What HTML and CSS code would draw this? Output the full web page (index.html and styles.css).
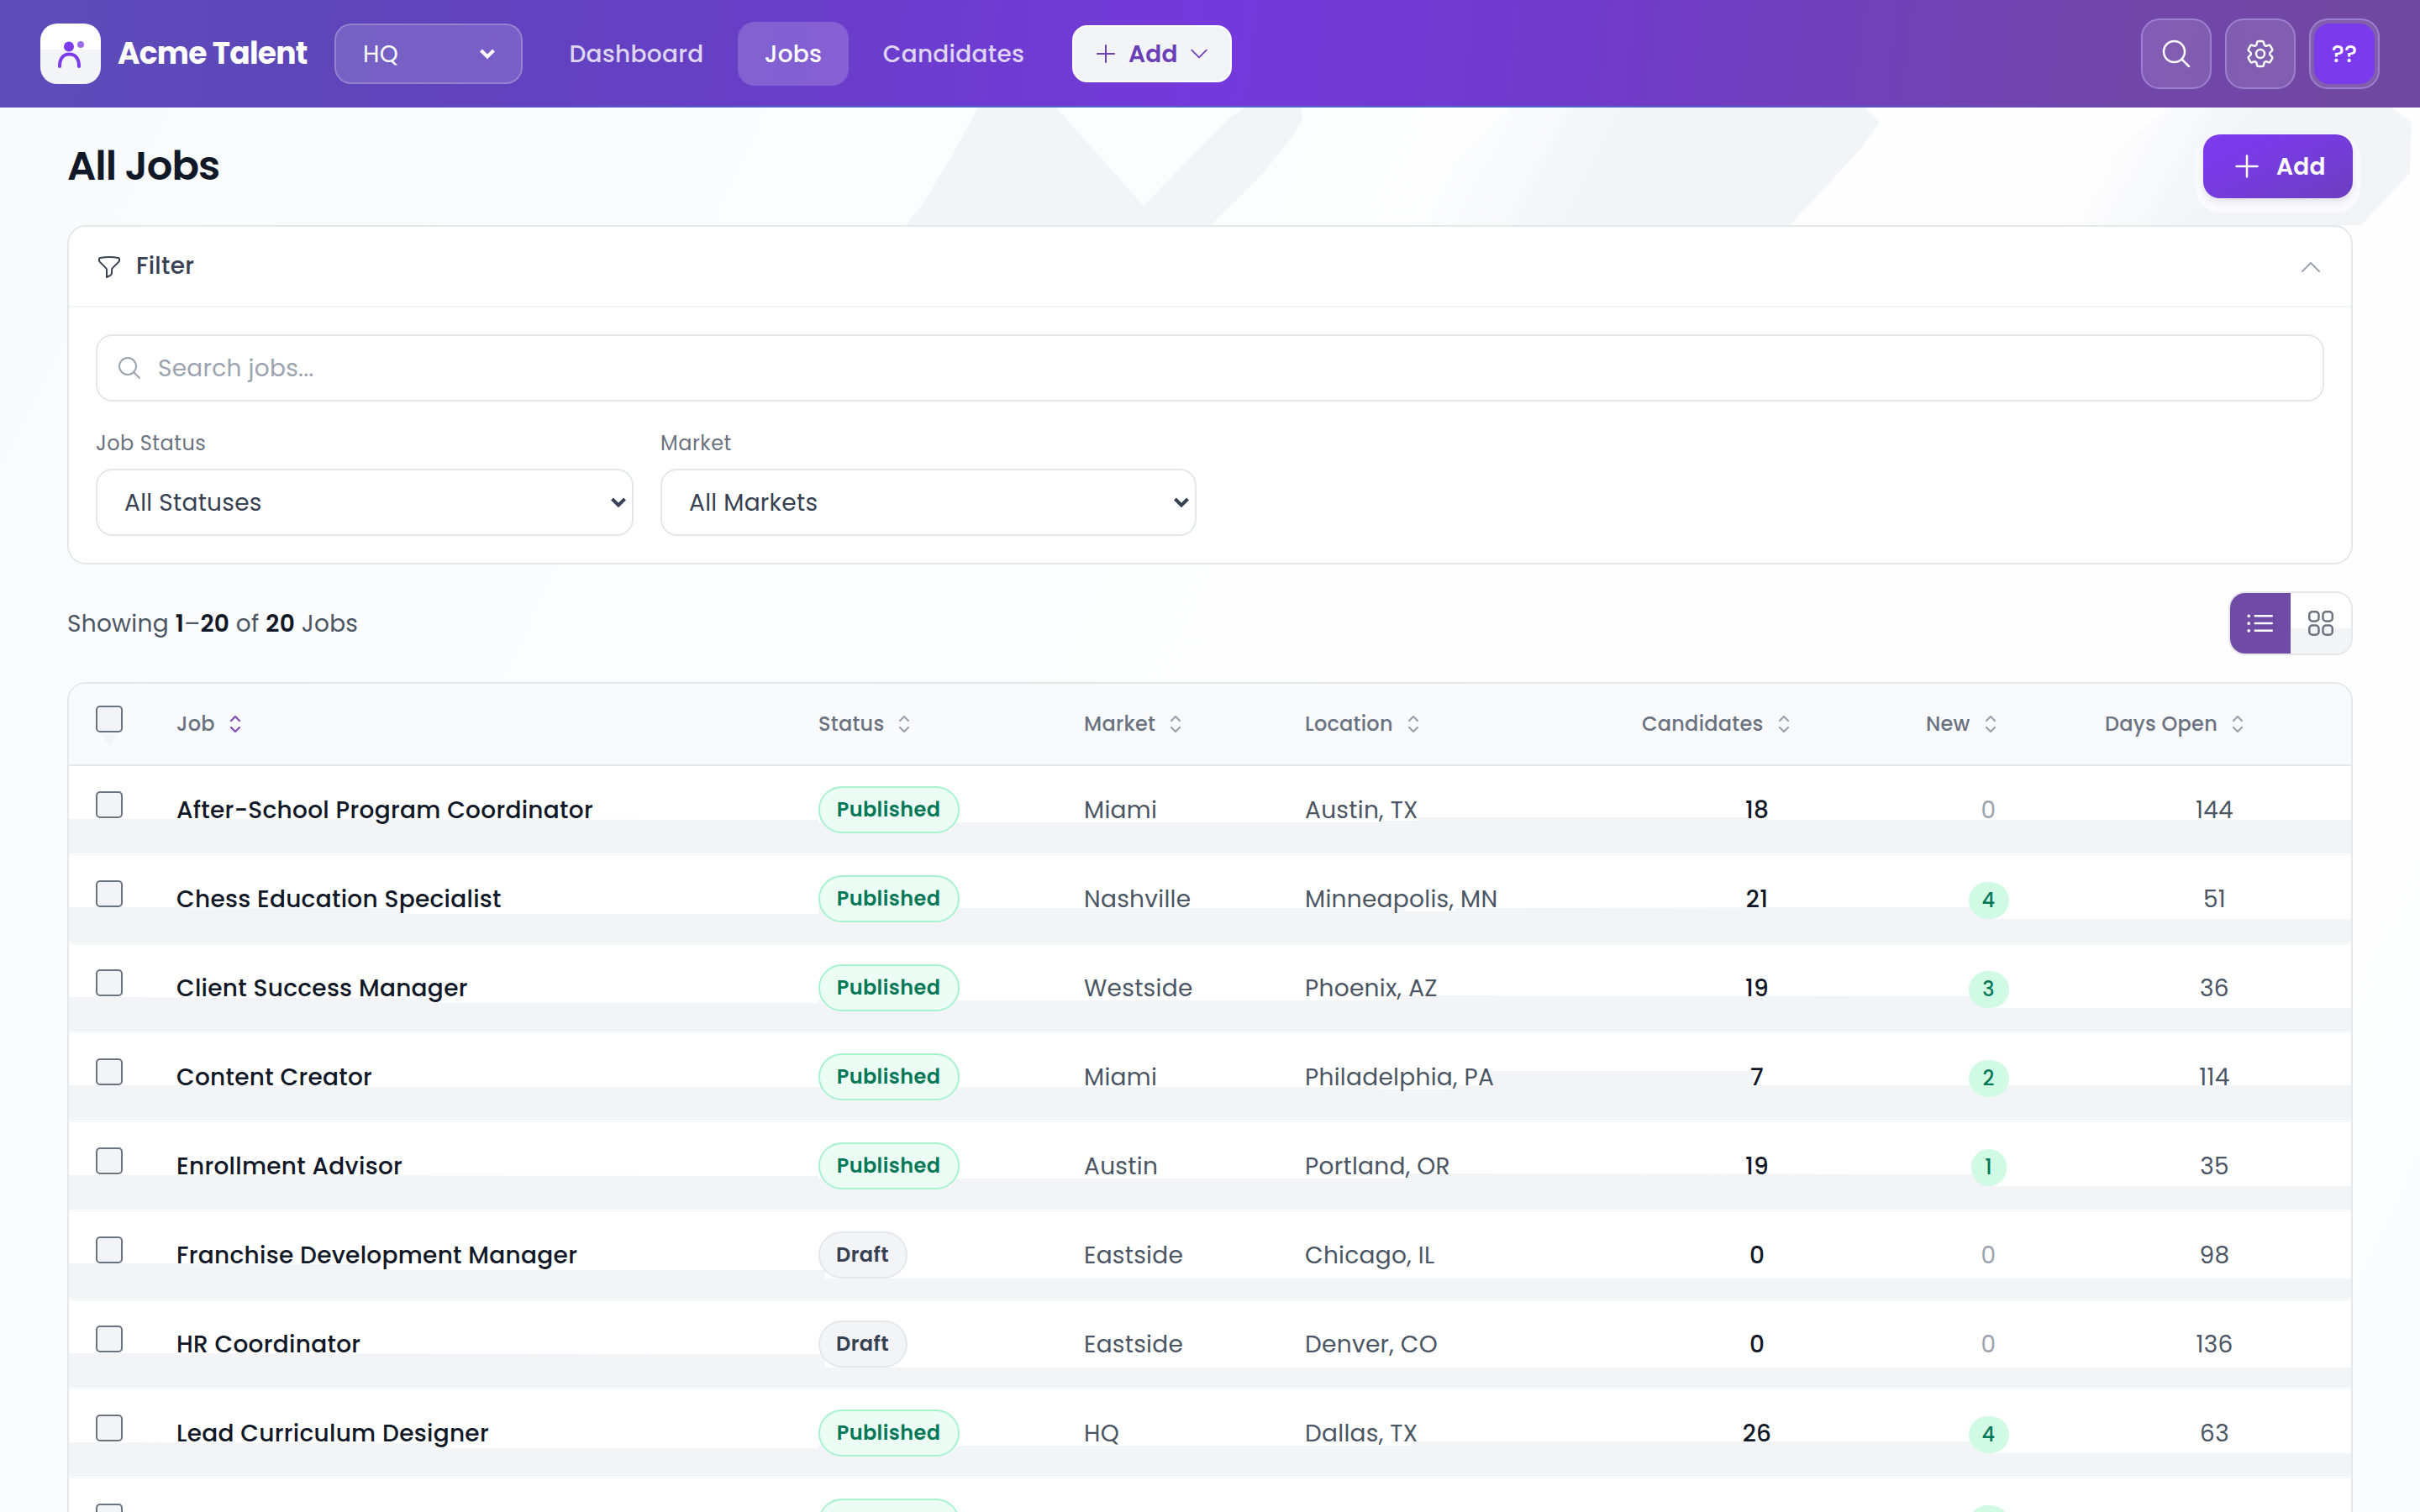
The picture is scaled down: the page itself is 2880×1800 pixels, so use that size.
FILE: index.html
```html
<!DOCTYPE html>
<html lang="en">
<head>
<meta charset="utf-8">
<title>All Jobs</title>
<link rel="stylesheet" href="styles.css">
</head>
<body>
<svg class="sprite" aria-hidden="true">
  <symbol id="plus" viewBox="0 0 24 24"><path d="M12 4.5v15m7.5-7.5h-15"/></symbol>
  <symbol id="down" viewBox="0 0 24 24"><path d="m19.5 8.25-7.5 7.5-7.5-7.5"/></symbol>
  <symbol id="up" viewBox="0 0 24 24"><path d="m4.5 15.75 7.5-7.5 7.5 7.5"/></symbol>
  <symbol id="search" viewBox="0 0 24 24"><path d="m21 21-5.197-5.197m0 0A7.5 7.5 0 1 0 5.196 5.196a7.5 7.5 0 0 0 10.607 10.607Z"/></symbol>
  <symbol id="caret" viewBox="0 0 20 14"><path d="m2.5 3 7.5 7.5L17.500 3"/></symbol>
  <symbol id="sort" viewBox="0 0 24 24"><path d="M8.250 15 12 18.750 15.750 15m-7.500-6L12 5.250 15.750 9"/></symbol>
</svg>

<header class="topbar">
  <span class="logo">
    <svg viewBox="0 0 72 72"><circle cx="34" cy="27.500" r="6"/><circle class="soft" cx="48" cy="25" r="4"/><path d="M23 51c0-8 3.500-14.500 11.500-14.500S46 43 46 51"/></svg>
  </span>
  <span class="brand">Acme Talent</span>
  <div class="region"><span>HQ</span><svg class="caret"><use href="#caret"/></svg></div>
  <nav class="nav">
    <a class="nav-link dashboard">Dashboard</a>
    <a class="nav-link active">Jobs</a>
    <a class="nav-link candidates">Candidates</a>
  </nav>
  <div class="quick-add"><svg class="i32"><use href="#plus"/></svg><span>Add</span><svg class="i28"><use href="#down"/></svg></div>
  <div class="tools">
    <span class="tool"><svg class="i40"><use href="#search"/></svg></span>
    <span class="tool"><svg class="i40" viewBox="0 0 24 24"><path d="M9.594 3.940c.09-.542.56-.940 1.110-.940h2.593c.55 0 1.020.398 1.110.940l.213 1.281c.063.374.313.686.645.870.074.040.147.083.220.127.325.196.720.257 1.075.124l1.217-.456a1.125 1.125 0 0 1 1.370.490l1.296 2.247a1.125 1.125 0 0 1-.260 1.431l-1.003.827c-.293.241-.438.613-.430.992a7.723 7.723 0 0 1 0 .255c-.008.378.137.750.430.991l1.004.827c.424.350.534.955.260 1.430l-1.298 2.247a1.125 1.125 0 0 1-1.369.491l-1.217-.456c-.355-.133-.750-.072-1.076.124a6.470 6.470 0 0 1-.220.128c-.331.183-.581.495-.644.869l-.213 1.281c-.090.543-.560.940-1.110.940h-2.594c-.550 0-1.019-.398-1.110-.940l-.213-1.281c-.062-.374-.312-.686-.644-.870a6.520 6.520 0 0 1-.220-.127c-.325-.196-.720-.257-1.076-.124l-1.217.456a1.125 1.125 0 0 1-1.369-.490l-1.297-2.247a1.125 1.125 0 0 1 .260-1.431l1.004-.827c.292-.240.437-.613.430-.991a6.932 6.932 0 0 1 0-.255c.007-.380-.138-.751-.430-.992l-1.004-.827a1.125 1.125 0 0 1-.260-1.430l1.297-2.247a1.125 1.125 0 0 1 1.370-.491l1.216.456c.356.133.751.072 1.076-.124.072-.044.146-.086.220-.128.332-.183.582-.495.644-.869l.214-1.280Z"/><path d="M15 12a3 3 0 1 1-6 0 3 3 0 0 1 6 0Z"/></svg></span>
    <span class="tool"><span class="avatar">??</span></span>
  </div>
</header>

<svg class="backdrop" viewBox="0 0 2880 140" aria-hidden="true">
  <defs>
    <linearGradient id="fadeA" gradientUnits="userSpaceOnUse" x1="1720" y1="40" x2="1890" y2="130"><stop offset="0" stop-color="#f3f4f8" stop-opacity="0"/><stop offset="1" stop-color="#f3f4f8"/></linearGradient>
    <linearGradient id="fadeB" gradientUnits="userSpaceOnUse" x1="2500" y1="30" x2="2640" y2="110"><stop offset="0" stop-color="#f3f4f8" stop-opacity="0"/><stop offset="1" stop-color="#f3f4f8"/></linearGradient>
  </defs>
  <path fill="#f3f4f8" d="M1164 0h93l104 117L1465 10q15-6 15-10h68l2 15-15 23-35 44-59 58H1078l20-25 34-56Z"/>
  <path fill="url(#fadeA)" d="M1800 0h420l17 18-22 30-40 44-45 48H1660Z"/>
  <path fill="url(#fadeB)" d="M2580 0h266l24 18-2 60-58 62H2420Z"/>
</svg>

<main class="page">
  <div class="title-row"><h1>All Jobs</h1><div class="add-button"><svg class="i40"><use href="#plus"/></svg><span>Add</span></div></div>

  <section class="card filter">
    <div class="filter-head"><svg class="i32" viewBox="0 0 24 24"><path d="M12 3c2.755 0 5.455.232 8.083.678.533.090.917.556.917 1.096v1.044a2.250 2.250 0 0 1-.659 1.591l-5.432 5.432a2.250 2.250 0 0 0-.659 1.591v2.927a2.250 2.250 0 0 1-1.244 2.013L9.750 21v-6.568a2.250 2.250 0 0 0-.659-1.591L3.659 7.409A2.250 2.250 0 0 1 3 5.818V4.774c0-.540.384-1.006.917-1.096A48.320 48.320 0 0 1 12 3Z"/></svg><span>Filter</span><svg class="i32 collapse"><use href="#up"/></svg></div>
    <div class="filter-body">
      <div class="field search"><svg class="i32"><use href="#search"/></svg><span>Search jobs...</span></div>
      <div class="selects">
        <div><label>Job Status</label><div class="field select"><span>All Statuses</span><svg class="caret"><use href="#caret"/></svg></div></div>
        <div><label>Market</label><div class="field select"><span>All Markets</span><svg class="caret"><use href="#caret"/></svg></div></div>
      </div>
    </div>
  </section>

  <div class="summary">
    <p>Showing <b>1</b>–<b>20</b> of <b>20</b> Jobs</p>
    <div class="toggle">
      <span class="on"><svg class="i40" viewBox="0 0 24 24"><path d="M8.250 6.750h12M8.250 12h12m-12 5.250h12M3.750 6.750h.007v.008H3.750V6.750Zm.375 0a.375.375 0 1 1-.750 0 .375.375 0 0 1 .750 0ZM3.750 12h.007v.008H3.750V12Zm.375 0a.375.375 0 1 1-.750 0 .375.375 0 0 1 .750 0Zm-.375 5.250h.007v.008H3.750v-.008Zm.375 0a.375.375 0 1 1-.750 0 .375.375 0 0 1 .750 0Z"/></svg></span>
      <span class="off"><svg class="i40" viewBox="0 0 24 24"><path d="M3.750 6A2.250 2.250 0 0 1 6 3.750h2.250A2.250 2.250 0 0 1 10.500 6v2.250a2.250 2.250 0 0 1-2.250 2.250H6a2.250 2.250 0 0 1-2.250-2.250V6ZM3.750 15.750A2.250 2.250 0 0 1 6 13.500h2.250a2.250 2.250 0 0 1 2.250 2.250V18a2.250 2.250 0 0 1-2.250 2.250H6A2.250 2.250 0 0 1 3.750 18v-2.250ZM13.500 6a2.250 2.250 0 0 1 2.250-2.250H18A2.250 2.250 0 0 1 20.250 6v2.250A2.250 2.250 0 0 1 18 10.500h-2.250a2.250 2.250 0 0 1-2.250-2.250V6ZM13.500 15.750a2.250 2.250 0 0 1 2.250-2.250H18a2.250 2.250 0 0 1 2.250 2.250V18A2.250 2.250 0 0 1 18 20.250h-2.250A2.250 2.250 0 0 1 13.500 18v-2.250Z"/></svg></span>
    </div>
  </div>

  <section class="card table">
    <div class="row head">
      <span class="all"><i class="check"></i></span>
      <span class="sorted">Job<svg class="i32"><use href="#sort"/></svg></span>
      <span>Status<svg class="i32"><use href="#sort"/></svg></span>
      <span>Market<svg class="i32"><use href="#sort"/></svg></span>
      <span>Location<svg class="i32"><use href="#sort"/></svg></span>
      <span>Candidates<svg class="i32"><use href="#sort"/></svg></span>
      <span>New<svg class="i32"><use href="#sort"/></svg></span>
      <span>Days Open<svg class="i32"><use href="#sort"/></svg></span>
    </div>
    <div class="rows">
      <div class="row"><span><i class="check"></i></span><span class="name">After-School Program Coordinator</span><span><em class="badge">Published</em></span><span class="text">Miami</span><span class="text">Austin, TX</span><span class="num total">18</span><span class="num zero">0</span><span class="num days">144</span></div>
      <div class="row"><span><i class="check"></i></span><span class="name">Chess Education Specialist</span><span><em class="badge">Published</em></span><span class="text">Nashville</span><span class="text">Minneapolis, MN</span><span class="num total">21</span><span class="num"><em class="count">4</em></span><span class="num days">51</span></div>
      <div class="row"><span><i class="check"></i></span><span class="name">Client Success Manager</span><span><em class="badge">Published</em></span><span class="text">Westside</span><span class="text">Phoenix, AZ</span><span class="num total">19</span><span class="num"><em class="count">3</em></span><span class="num days">36</span></div>
      <div class="row"><span><i class="check"></i></span><span class="name">Content Creator</span><span><em class="badge">Published</em></span><span class="text">Miami</span><span class="text">Philadelphia, PA</span><span class="num total">7</span><span class="num"><em class="count">2</em></span><span class="num days">114</span></div>
      <div class="row"><span><i class="check"></i></span><span class="name">Enrollment Advisor</span><span><em class="badge">Published</em></span><span class="text">Austin</span><span class="text">Portland, OR</span><span class="num total">19</span><span class="num"><em class="count narrow">1</em></span><span class="num days">35</span></div>
      <div class="row"><span><i class="check"></i></span><span class="name">Franchise Development Manager</span><span><em class="badge draft">Draft</em></span><span class="text">Eastside</span><span class="text">Chicago, IL</span><span class="num total">0</span><span class="num zero">0</span><span class="num days">98</span></div>
      <div class="row"><span><i class="check"></i></span><span class="name">HR Coordinator</span><span><em class="badge draft">Draft</em></span><span class="text">Eastside</span><span class="text">Denver, CO</span><span class="num total">0</span><span class="num zero">0</span><span class="num days">136</span></div>
      <div class="row"><span><i class="check"></i></span><span class="name">Lead Curriculum Designer</span><span><em class="badge">Published</em></span><span class="text">HQ</span><span class="text">Dallas, TX</span><span class="num total">26</span><span class="num"><em class="count">4</em></span><span class="num days">63</span></div>
      <div class="row"><span><i class="check"></i></span><span></span><span><em class="badge"></em></span><span></span><span></span><span></span><span class="num"><em class="count"></em></span><span></span></div>
    </div>
  </section>
</main>
</body>
</html>
```
FILE: styles.css
```css
* { box-sizing: border-box; }
html { overflow: hidden; }
body {
  margin: 0;
  height: 1800px;
  overflow: hidden;
  position: relative;
  font-family: Poppins, Inter, "Noto Sans", sans-serif;
  font-size: 28px;
  line-height: 1;
  letter-spacing: 0.28px;
  color: #4b5563;
  background: linear-gradient(115deg, #f9fafc 0%, #fbfcfe 25%, #fefefe 60%, #fefefe 85%, #fafbfd 100%);
}
svg { display: block; flex: none; fill: none; stroke: currentColor; stroke-width: 1.5; stroke-linecap: round; stroke-linejoin: round; }
.sprite { position: absolute; width: 0; height: 0; }
.i28 { width: 28px; height: 28px; }
.i32 { width: 32px; height: 32px; }
.i40 { width: 40px; height: 40px; }
.caret { width: 20px; height: 14px; stroke-width: 4; stroke-linecap: butt; stroke-linejoin: miter; }

/* Top bar */
.topbar {
  height: 128px;
  padding: 0 48px;
  display: flex;
  align-items: center;
  color: #fff;
  background:
    linear-gradient(90deg, rgba(79,99,200,0) 15%, #4f63c8 35%, #4f63c8 65%, rgba(79,99,200,0) 90%) bottom / 100% 2px no-repeat,
    linear-gradient(97deg, #5e4dbb 0%, #5d47b8 12%, #663fc5 30%, #7439db 50%, #703bcb 65%, #7146ab 86%, #6f499f 100%);
}
.logo { width: 72px; height: 72px; border-radius: 20px; background: linear-gradient(#fff 43%, #f3f4f8 43%); color: #7c3aed; }
.logo svg { width: 72px; height: 72px; stroke-width: 4; }
.logo circle { fill: currentColor; stroke: none; }
.logo .soft { opacity: 0.75; }
.brand { width: 258px; margin-left: 20px; font-size: 36px; font-weight: 700; letter-spacing: -0.72px; white-space: nowrap; }
.region { width: 224px; height: 72px; padding: 0 30px 0 32px; display: flex; align-items: center; justify-content: space-between; border: 2px solid rgba(255,255,255,.22); border-radius: 20px; background: rgba(255,255,255,.15); }
.region span { padding-top: 2px; }
.nav { margin-left: 24px; display: flex; }
.nav-link { height: 76px; padding-top: 2px; display: flex; align-items: center; justify-content: center; font-weight: 500; color: rgba(255,255,255,.78); }
.dashboard { width: 222px; padding-left: 1px; }
.active { width: 132px; margin: 0 10px; border-radius: 20px; color: #fff; background: rgba(255,255,255,.18); }
.candidates { width: 230px; }
.quick-add { width: 190px; height: 68px; margin-left: 26px; padding-left: 22px; display: flex; align-items: center; border-radius: 18px; background: #f3f4f8; border: 2px solid #fff; color: #6b3fb5; font-weight: 600; }
.quick-add span { width: 56px; margin: 0 14px 0 11px; padding-top: 2px; }
.tools { margin-left: auto; display: flex; gap: 16px; }
.tool { width: 84px; height: 84px; display: grid; place-items: center; border: 2px solid rgba(168,140,220,.75); border-radius: 22px; background: rgba(255,255,255,.12); }
.avatar { width: 72px; height: 72px; padding-top: 2px; display: grid; place-items: center; border-radius: 18px; background: #7c3aed; font-weight: 500; }

.backdrop { position: absolute; left: 0; top: 128px; width: 2880px; height: 140px; stroke: none; }

/* Page */
.page { position: relative; padding: 32px 80px 0; }
.title-row { height: 76px; display: flex; justify-content: space-between; align-items: center; }
h1 { margin: 0 0 1px; font-size: 48px; font-weight: 600; letter-spacing: -1px; color: #111827; }
.add-button { width: 178px; height: 76px; padding-left: 32px; display: flex; align-items: center; gap: 15px; border-radius: 20px; color: #fff; font-weight: 600; background: linear-gradient(155deg, #7c3aed 20%, #6b3fbf 100%); box-shadow: 0 4px 8px rgba(75,60,120,.14), 0 8px 0 9px rgba(253,253,254,.8); }
.add-button span { padding-top: 2px; }
.card { border: 2px solid #e5e7eb; border-radius: 22px; background: #fff; }
.filter { height: 404px; margin-top: 32px; }
.filter-head { height: 96px; padding: 0 32px; display: flex; align-items: center; gap: 16px; border-bottom: 2px solid #f3f4f6; color: #374151; font-weight: 500; }
.filter-head svg { margin-top: 2px; }
.filter-head .collapse { margin-left: auto; color: #9ca3af; }
.filter-body { padding: 32px; }
.field { height: 80px; display: flex; align-items: center; border: 2px solid #e5e7eb; border-radius: 20px; background: #fff; }
.field span { padding-top: 2px; }
.search { padding: 0 22px; gap: 18px; color: #9ca3af; }
.selects { display: grid; grid-template-columns: 640px 638px; gap: 32px; margin-top: 36px; }
label { display: block; height: 44px; line-height: 28px; font-size: 24px; letter-spacing: 0.5px; color: #6b7280; }
.select { padding: 0 6px 0 32px; justify-content: space-between; color: #374151; }
.summary { height: 140px; display: flex; align-items: center; justify-content: space-between; }
.summary p { margin: 0; padding-top: 2px; }
b { font-weight: 600; color: #111827; }
.toggle { width: 148px; height: 76px; display: flex; overflow: hidden; border: 2px solid #e5e7eb; border-radius: 20px; }
.toggle span { flex: 1; display: grid; place-items: center; }
.toggle .on { color: #fff; background: #704ba5; }
.toggle .off { color: #6b7280; background: linear-gradient(#fff 58%, #f3f4f8 58%); }

/* Jobs table */
.table { height: 988px; overflow: hidden; border-bottom: 0; border-radius: 22px 22px 0 0; }
.row { position: relative; height: 106px; display: grid; grid-template-columns: 96px 764px 316px 263px 401px 338px 213px 325px; align-items: center; border-bottom: 2px solid transparent; background: linear-gradient(to top, #f3f4f6 1px, transparent 1px) border-box; background-origin: border-box; }
.row > span { position: relative; padding: 0 32px; display: flex; align-items: center; white-space: nowrap; }
.row > .name, .row > .text, .row > .total, .row > .zero, .row > .days { padding-top: 2px; }
.row > .num { justify-content: center; padding-left: 0; padding-right: 0; }
.head { height: 98px; border-color: #e5e7eb; background: #f9fafc; color: #6b7280; font-size: 24px; font-weight: 500; letter-spacing: 0.24px; }
.head svg { margin-left: 8px; color: #9ca3af; stroke-width: 1.7; }
.head .sorted svg { color: #7e4fb5; }
.check { position: relative; top: -6px; width: 32px; height: 32px; border: 2px solid #6b7280; border-radius: 5px; background: #f3f4f8; }
.all .check::after { content: ""; position: absolute; left: 6px; top: 32px; width: 17px; height: 17px; background: #f3f4f8; clip-path: polygon(0 0, 100% 0, 50% 100%); }
.name { color: #111827; font-weight: 500; }
.total { color: #111827; font-weight: 500; }
.zero { color: #9ca3af; }
.badge { width: 168px; height: 56px; padding-right: 1px; display: grid; place-items: center; border: 2px solid #a7f3d0; border-radius: 28px; background: #ecfdf5; color: #047857; font-size: 24px; font-style: normal; font-weight: 600; letter-spacing: 0.4px; }
.draft { width: 106px; border-color: #e5e7eb; background: #f3f4f8; color: #374151; }
.count { position: relative; top: 2px; width: 48px; height: 44px; display: grid; place-items: center; border-radius: 22px; background: #d1fae5; color: #047857; font-size: 24px; font-style: normal; font-weight: 500; letter-spacing: 0.24px; }
.narrow { width: 42px; }

/* Stepped shading along the lower part of each row */
.rows .row::before { content: ""; position: absolute; left: 0; right: 0; top: 0; height: 104px; background: #f3f4f8; }
.rows .row:nth-child(1)::before { clip-path: polygon(0 63px, 892px 64px, 892px 67px, 1561px 67px, 1561px 65px, 1605px 65px, 1605px 61px, 2009px 61px, 2009px 64px, 100% 64px, 100% 100%, 0 100%); }
.rows .row:nth-child(2)::before { clip-path: polygon(0 62px, 395px 63px, 395px 70px, 892px 70px, 892px 63px, 1590px 63px, 1590px 67px, 1650px 67px, 1650px 63px, 2280px 62px, 2280px 76px, 100% 76px, 100% 100%, 0 100%); }
.rows .row:nth-child(3)::before { clip-path: polygon(0 63px, 440px 64px, 440px 70px, 892px 70px, 892px 67px, 1585px 67px, 1585px 61px, 2280px 62px, 2280px 76px, 100% 76px, 100% 100%, 0 100%); }
.rows .row:nth-child(4)::before { clip-path: polygon(0 62px, 310px 62px, 310px 64px, 1560px 64px, 1560px 67px, 1645px 67px, 1645px 62px, 1690px 62px, 1690px 45px, 2005px 45px, 2005px 62px, 100% 62px, 100% 100%, 0 100%); }
.rows .row:nth-child(5)::before { clip-path: polygon(0 63px, 892px 64px, 892px 67px, 1590px 67px, 1590px 61px, 2280px 62px, 2280px 76px, 100% 76px, 100% 100%, 0 100%); }
.rows .row:nth-child(6)::before { clip-path: polygon(0 62px, 370px 63px, 370px 70px, 900px 70px, 900px 80px, 100% 80px, 100% 100%, 0 100%); }
.rows .row:nth-child(7)::before { clip-path: polygon(0 63px, 900px 64px, 900px 80px, 100% 80px, 100% 100%, 0 100%); }
.rows .row:nth-child(8)::before { clip-path: polygon(0 63px, 440px 64px, 440px 70px, 892px 70px, 892px 67px, 1600px 67px, 1600px 62px, 2280px 62px, 2280px 76px, 100% 76px, 100% 100%, 0 100%); }
.rows .row:nth-child(9)::before { display: none; }
```
